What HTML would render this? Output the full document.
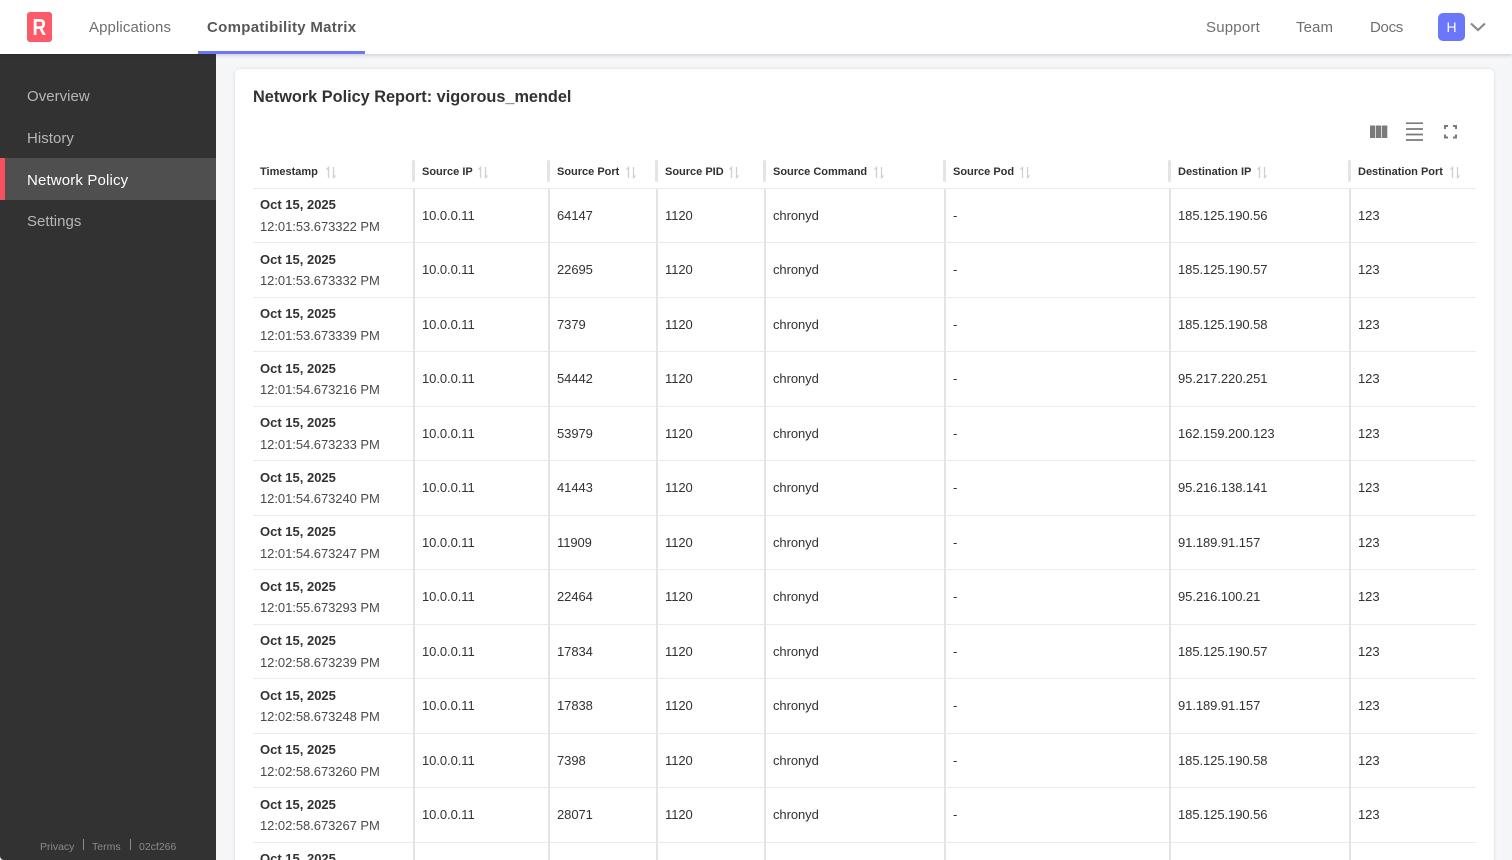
<!DOCTYPE html>
<html><head><meta charset="utf-8"><title>Network Policy Report</title>
<style>
*{box-sizing:border-box}
html,body{margin:0;padding:0;width:1512px;height:860px;overflow:hidden;background:#f5f6f8;font-family:"Liberation Sans",sans-serif;color:#323232}
.wrap{position:relative;width:1512px;height:860px;overflow:hidden}
.hd{position:absolute;left:0;top:0;width:1512px;height:54px;background:#fff;box-shadow:0 1px 4px rgba(0,0,0,.2);z-index:3}
.n{position:absolute;top:18px;font-size:15px;line-height:20px;color:#6f6f6f;letter-spacing:.1px;white-space:nowrap}
.logo{position:absolute;left:27px;top:12px;width:25px;height:30px;background:#fc5a68;border-radius:3px;color:#fff;font-weight:700;font-size:23px;line-height:30px;text-align:center}
.logo span{display:inline-block;transform:scaleX(.82)}
.ul{position:absolute;left:198px;top:51px;width:167px;height:3px;background:#6a77fb}
.av{position:absolute;left:1438px;top:13px;width:27px;height:28px;border-radius:5px;background:#6a77fb;color:#fff;font-size:14px;line-height:28px;text-align:center}
.sb{position:absolute;left:0;top:54px;width:216px;height:806px;background:#323232;border-bottom-left-radius:4px}
.si{position:absolute;left:27px;font-size:15px;line-height:20px;letter-spacing:.03px;color:#b3b8b6}
.act{position:absolute;left:0;top:104px;width:216px;height:42px;background:#4f4f4f;border-left:5px solid #f7505f}
.ft{position:absolute;top:786px;font-size:10.5px;line-height:14px;color:#8b8b8b;white-space:nowrap}
.fs{position:absolute;top:785px;width:1px;height:11px;background:#8b8b8b}
.card{position:absolute;left:235px;top:69px;width:1259px;height:800px;background:#fff;border-radius:5px;box-shadow:0 0 3px rgba(0,0,0,.13)}
h1{position:absolute;left:253px;top:86px;margin:0;font-size:16.3px;line-height:22px;font-weight:700;color:#323232;white-space:nowrap}
.tb{position:absolute;left:253px;top:155px;width:1223px}
.tr{position:relative;height:54.5px;border-bottom:1px solid #ebebeb;font-size:13px;color:#323232}
.th{height:33.5px;border-bottom:1px solid #ebebeb}
.tr span{position:absolute;top:0;line-height:54px;white-space:nowrap;letter-spacing:-.07px}
.c1{left:169px}.c2{left:304px}.c3{left:412px}.c4{left:520px}.c5{left:700px}.c6{left:925px}.c7{left:1105px}
.d{position:absolute;left:7px;top:5.5px;line-height:21px;white-space:nowrap}
.d b{display:block;font-weight:700;font-size:13px;color:#323232}
.d i{display:block;font-style:normal;margin-top:.5px;color:#4a4a4a;letter-spacing:-.05px}
.v{position:absolute;top:0;bottom:-1px;width:1.5px;background:#e4e4e4}
.th b{position:absolute;top:10px;font-size:11px;line-height:14px;color:#323232;white-space:nowrap}
.hs{position:absolute;top:5px;width:3px;height:22px;background:#e4e4e4;border-radius:2px}
.th svg{position:absolute;top:11px}
</style></head><body><div class="wrap">
<div class="hd">
<div class="logo"><span>R</span></div>
<div class="n" style="left:89px">Applications</div>
<div class="n" style="left:207px;font-weight:700;color:#585858;letter-spacing:.3px">Compatibility Matrix</div>
<div class="ul"></div>
<div class="n" style="left:1206px;letter-spacing:.2px">Support</div>
<div class="n" style="left:1296px">Team</div>
<div class="n" style="left:1370px;letter-spacing:-.3px">Docs</div>
<div class="av">H</div>
<svg style="position:absolute;left:1470px;top:22px" width="16" height="10" viewBox="0 0 16 10"><path d="M1 1.500 8 8 15 1.500" fill="none" stroke="#8a8a8a" stroke-width="2.200"/></svg>
</div>
<div class="sb">
<div class="act"></div>
<div class="si" style="top:33px">Overview</div>
<div class="si" style="top:75px">History</div>
<div class="si" style="top:117px;color:#fff;letter-spacing:.15px">Network Policy</div>
<div class="si" style="top:158px">Settings</div>
<div class="ft" style="left:40px">Privacy</div><div class="fs" style="left:83px"></div>
<div class="ft" style="left:92px">Terms</div><div class="fs" style="left:130px"></div>
<div class="ft" style="left:139px">02cf266</div>
</div>
<div class="card"></div>
<h1>Network Policy Report: vigorous_mendel</h1>
<svg style="position:absolute;left:1370px;top:122px" width="112" height="20" viewBox="0 0 112 20">
<path d="M0 3.500h5.300v12.500H0zM6 3.500h5.300v12.500H6zM12 3.500h5.300v12.500H12z" fill="#7a7a7a"/>
<path d="M36 1.200h17M36 7h17M36 12.500h17M36 18h17" stroke="#7a7a7a" stroke-width="1.700" fill="none"/>
<path d="M75 7V4h3M83 4h3v3M86 12.500v3h-3M78 15.500h-3v-3" stroke="#7a7a7a" stroke-width="2" fill="none"/>
</svg>
<div class="tb">
<div class="tr th">
<b style="left:7px">Timestamp</b><svg style="left:72px" width="12" height="13"><path d="M3.500 12V1.500L1.500 3.500M8.500 1V11.500l2-2" stroke="#cfcfcf" stroke-width="1.300" fill="none"/></svg><div class="hs" style="left:159px"></div>
<b style="left:169px">Source IP</b><svg style="left:224px" width="12" height="13"><path d="M3.500 12V1.500L1.500 3.500M8.500 1V11.500l2-2" stroke="#cfcfcf" stroke-width="1.300" fill="none"/></svg><div class="hs" style="left:294px"></div>
<b style="left:304px">Source Port</b><svg style="left:372px" width="12" height="13"><path d="M3.500 12V1.500L1.500 3.500M8.500 1V11.500l2-2" stroke="#cfcfcf" stroke-width="1.300" fill="none"/></svg><div class="hs" style="left:402px"></div>
<b style="left:412px">Source PID</b><svg style="left:475px" width="12" height="13"><path d="M3.500 12V1.500L1.500 3.500M8.500 1V11.500l2-2" stroke="#cfcfcf" stroke-width="1.300" fill="none"/></svg><div class="hs" style="left:510px"></div>
<b style="left:520px">Source Command</b><svg style="left:620px" width="12" height="13"><path d="M3.500 12V1.500L1.500 3.500M8.500 1V11.500l2-2" stroke="#cfcfcf" stroke-width="1.300" fill="none"/></svg><div class="hs" style="left:690px"></div>
<b style="left:700px">Source Pod</b><svg style="left:766px" width="12" height="13"><path d="M3.500 12V1.500L1.500 3.500M8.500 1V11.500l2-2" stroke="#cfcfcf" stroke-width="1.300" fill="none"/></svg><div class="hs" style="left:915px"></div>
<b style="left:925px">Destination IP</b><svg style="left:1003px" width="12" height="13"><path d="M3.500 12V1.500L1.500 3.500M8.500 1V11.500l2-2" stroke="#cfcfcf" stroke-width="1.300" fill="none"/></svg><div class="hs" style="left:1095px"></div>
<b style="left:1105px">Destination Port</b><svg style="left:1196px" width="12" height="13"><path d="M3.500 12V1.500L1.500 3.500M8.500 1V11.500l2-2" stroke="#cfcfcf" stroke-width="1.300" fill="none"/></svg>
</div>
<div class="tr"><div class="d"><b>Oct 15, 2025</b><i>12:01:53.673322 PM</i></div><div class="v" style="left:160px"></div><div class="v" style="left:295px"></div><div class="v" style="left:403px"></div><div class="v" style="left:511px"></div><div class="v" style="left:691px"></div><div class="v" style="left:916px"></div><div class="v" style="left:1096px"></div><span class="c1">10.0.0.11</span><span class="c2">64147</span><span class="c3">1120</span><span class="c4">chronyd</span><span class="c5">-</span><span class="c6">185.125.190.56</span><span class="c7">123</span></div>
<div class="tr"><div class="d"><b>Oct 15, 2025</b><i>12:01:53.673332 PM</i></div><div class="v" style="left:160px"></div><div class="v" style="left:295px"></div><div class="v" style="left:403px"></div><div class="v" style="left:511px"></div><div class="v" style="left:691px"></div><div class="v" style="left:916px"></div><div class="v" style="left:1096px"></div><span class="c1">10.0.0.11</span><span class="c2">22695</span><span class="c3">1120</span><span class="c4">chronyd</span><span class="c5">-</span><span class="c6">185.125.190.57</span><span class="c7">123</span></div>
<div class="tr"><div class="d"><b>Oct 15, 2025</b><i>12:01:53.673339 PM</i></div><div class="v" style="left:160px"></div><div class="v" style="left:295px"></div><div class="v" style="left:403px"></div><div class="v" style="left:511px"></div><div class="v" style="left:691px"></div><div class="v" style="left:916px"></div><div class="v" style="left:1096px"></div><span class="c1">10.0.0.11</span><span class="c2">7379</span><span class="c3">1120</span><span class="c4">chronyd</span><span class="c5">-</span><span class="c6">185.125.190.58</span><span class="c7">123</span></div>
<div class="tr"><div class="d"><b>Oct 15, 2025</b><i>12:01:54.673216 PM</i></div><div class="v" style="left:160px"></div><div class="v" style="left:295px"></div><div class="v" style="left:403px"></div><div class="v" style="left:511px"></div><div class="v" style="left:691px"></div><div class="v" style="left:916px"></div><div class="v" style="left:1096px"></div><span class="c1">10.0.0.11</span><span class="c2">54442</span><span class="c3">1120</span><span class="c4">chronyd</span><span class="c5">-</span><span class="c6">95.217.220.251</span><span class="c7">123</span></div>
<div class="tr"><div class="d"><b>Oct 15, 2025</b><i>12:01:54.673233 PM</i></div><div class="v" style="left:160px"></div><div class="v" style="left:295px"></div><div class="v" style="left:403px"></div><div class="v" style="left:511px"></div><div class="v" style="left:691px"></div><div class="v" style="left:916px"></div><div class="v" style="left:1096px"></div><span class="c1">10.0.0.11</span><span class="c2">53979</span><span class="c3">1120</span><span class="c4">chronyd</span><span class="c5">-</span><span class="c6">162.159.200.123</span><span class="c7">123</span></div>
<div class="tr"><div class="d"><b>Oct 15, 2025</b><i>12:01:54.673240 PM</i></div><div class="v" style="left:160px"></div><div class="v" style="left:295px"></div><div class="v" style="left:403px"></div><div class="v" style="left:511px"></div><div class="v" style="left:691px"></div><div class="v" style="left:916px"></div><div class="v" style="left:1096px"></div><span class="c1">10.0.0.11</span><span class="c2">41443</span><span class="c3">1120</span><span class="c4">chronyd</span><span class="c5">-</span><span class="c6">95.216.138.141</span><span class="c7">123</span></div>
<div class="tr"><div class="d"><b>Oct 15, 2025</b><i>12:01:54.673247 PM</i></div><div class="v" style="left:160px"></div><div class="v" style="left:295px"></div><div class="v" style="left:403px"></div><div class="v" style="left:511px"></div><div class="v" style="left:691px"></div><div class="v" style="left:916px"></div><div class="v" style="left:1096px"></div><span class="c1">10.0.0.11</span><span class="c2">11909</span><span class="c3">1120</span><span class="c4">chronyd</span><span class="c5">-</span><span class="c6">91.189.91.157</span><span class="c7">123</span></div>
<div class="tr"><div class="d"><b>Oct 15, 2025</b><i>12:01:55.673293 PM</i></div><div class="v" style="left:160px"></div><div class="v" style="left:295px"></div><div class="v" style="left:403px"></div><div class="v" style="left:511px"></div><div class="v" style="left:691px"></div><div class="v" style="left:916px"></div><div class="v" style="left:1096px"></div><span class="c1">10.0.0.11</span><span class="c2">22464</span><span class="c3">1120</span><span class="c4">chronyd</span><span class="c5">-</span><span class="c6">95.216.100.21</span><span class="c7">123</span></div>
<div class="tr"><div class="d"><b>Oct 15, 2025</b><i>12:02:58.673239 PM</i></div><div class="v" style="left:160px"></div><div class="v" style="left:295px"></div><div class="v" style="left:403px"></div><div class="v" style="left:511px"></div><div class="v" style="left:691px"></div><div class="v" style="left:916px"></div><div class="v" style="left:1096px"></div><span class="c1">10.0.0.11</span><span class="c2">17834</span><span class="c3">1120</span><span class="c4">chronyd</span><span class="c5">-</span><span class="c6">185.125.190.57</span><span class="c7">123</span></div>
<div class="tr"><div class="d"><b>Oct 15, 2025</b><i>12:02:58.673248 PM</i></div><div class="v" style="left:160px"></div><div class="v" style="left:295px"></div><div class="v" style="left:403px"></div><div class="v" style="left:511px"></div><div class="v" style="left:691px"></div><div class="v" style="left:916px"></div><div class="v" style="left:1096px"></div><span class="c1">10.0.0.11</span><span class="c2">17838</span><span class="c3">1120</span><span class="c4">chronyd</span><span class="c5">-</span><span class="c6">91.189.91.157</span><span class="c7">123</span></div>
<div class="tr"><div class="d"><b>Oct 15, 2025</b><i>12:02:58.673260 PM</i></div><div class="v" style="left:160px"></div><div class="v" style="left:295px"></div><div class="v" style="left:403px"></div><div class="v" style="left:511px"></div><div class="v" style="left:691px"></div><div class="v" style="left:916px"></div><div class="v" style="left:1096px"></div><span class="c1">10.0.0.11</span><span class="c2">7398</span><span class="c3">1120</span><span class="c4">chronyd</span><span class="c5">-</span><span class="c6">185.125.190.58</span><span class="c7">123</span></div>
<div class="tr"><div class="d"><b>Oct 15, 2025</b><i>12:02:58.673267 PM</i></div><div class="v" style="left:160px"></div><div class="v" style="left:295px"></div><div class="v" style="left:403px"></div><div class="v" style="left:511px"></div><div class="v" style="left:691px"></div><div class="v" style="left:916px"></div><div class="v" style="left:1096px"></div><span class="c1">10.0.0.11</span><span class="c2">28071</span><span class="c3">1120</span><span class="c4">chronyd</span><span class="c5">-</span><span class="c6">185.125.190.56</span><span class="c7">123</span></div>
<div class="tr" style="border:0"><div class="d"><b>Oct 15, 2025</b></div><div class="v" style="left:160px"></div><div class="v" style="left:295px"></div><div class="v" style="left:403px"></div><div class="v" style="left:511px"></div><div class="v" style="left:691px"></div><div class="v" style="left:916px"></div><div class="v" style="left:1096px"></div></div>
</div>
</div></body></html>
